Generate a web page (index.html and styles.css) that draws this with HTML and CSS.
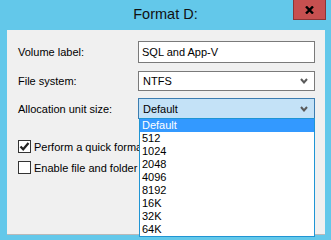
FILE: index.html
```html
<!DOCTYPE html>
<html lang="en">
<head>
  <meta charset="UTF-8" />
  <title>Format D:</title>
  <link rel="stylesheet" href="styles.css" />
</head>
<body>

<div class="window">
  <!-- Title bar -->
  <div class="titlebar">
    <span class="title">Format D:</span>
    <button class="close" type="button" aria-label="Close">
      <svg width="9" height="8" viewBox="0 0 9 8">
        <path d="M1 0.5 L8 7.5 M8 0.5 L1 7.5" stroke="#000" stroke-width="2.4" fill="none" />
      </svg>
    </button>
  </div>

  <!-- Dialog content -->
  <div class="panel">
    <div class="row row-text">
      <span class="label">Volume label:</span>
      <div class="field textbox">SQL and App-V</div>
    </div>

    <div class="row row-fs">
      <span class="label">File system:</span>
      <div class="field combo">
        <span>NTFS</span>
        <svg class="chevron" width="8" height="6" viewBox="0 0 8 6">
          <path d="M1 1 L4 4.5 L7 1" stroke="#5a5a5a" stroke-width="2" fill="none" />
        </svg>
      </div>
    </div>

    <div class="row row-alloc">
      <span class="label">Allocation unit size:</span>
      <div class="field-wrap">
        <div class="field combo combo-open">
          <span>Default</span>
          <svg class="chevron" width="8" height="6" viewBox="0 0 8 6">
            <path d="M1 1 L4 4.5 L7 1" stroke="#5a5a5a" stroke-width="2" fill="none" />
          </svg>
        </div>
        <ul class="dropdown">
          <li class="selected">Default</li>
          <li>512</li>
          <li>1024</li>
          <li>2048</li>
          <li>4096</li>
          <li>8192</li>
          <li>16K</li>
          <li>32K</li>
          <li>64K</li>
        </ul>
      </div>
    </div>

    <!-- checkbox labels run under the open list, so they are cut at its edge -->
    <div class="checks">
      <div class="check">
        <span class="box">
          <svg width="11" height="11" viewBox="0 0 11 11">
            <path d="M1.5 5.5 L4.2 8.3 L9.5 2" stroke="#222" stroke-width="2.2" fill="none" />
          </svg>
        </span>
        <span>Perform a quick format</span>
      </div>
      <div class="check">
        <span class="box"></span>
        <span>Enable file and folder compression</span>
      </div>
    </div>
  </div>
</div>

</body>
</html>
```

FILE: styles.css
```css
* {
  margin: 0;
  padding: 0;
  box-sizing: border-box;
}

body {
  font-family: "Liberation Sans", Arial, sans-serif;
  font-size: 11px;
  color: #000;
  background: #63c8ea;
}

.window {
  width: 331px;
  height: 240px;
  background: #63c8ea;
  overflow: hidden;
}

/* Title bar */
.titlebar {
  height: 30px;
  display: grid;
  grid-template-columns: 1fr auto 1fr;
  align-items: start;
}

.title {
  grid-column: 2;
  padding-top: 5px;
  font-size: 14.5px;
  line-height: 18px;
  color: #111;
}

.close {
  grid-column: 3;
  justify-self: end;
  width: 33px;
  height: 20px;
  margin-right: 5px;
  background: #c75050;
  border: 1px solid #8c3535;
  border-top: none;
  display: flex;
  align-items: center;
  justify-content: center;
}

/* Panel */
.panel {
  margin: 0 6px 0 7px;
  height: 205px;
  padding: 11px 10px 0 11px;
  background: #f0f0f0;
  border-bottom: 1px solid #b9b9b9;
}

.row {
  display: grid;
  grid-template-columns: 120px 1fr;
  align-items: center;
}

.row-text { height: 22px; margin-bottom: 8px; }
.row-fs { height: 20px; margin-bottom: 7px; }
.row-alloc { height: 21px; }

.label {
  line-height: 14px;
}

.field {
  height: 100%;
  display: flex;
  align-items: center;
  padding-left: 3px;
  background: #fff;
  border: 1px solid #7a7a7a;
}

.field-wrap {
  height: 100%;
  position: relative;
}

.combo {
  justify-content: space-between;
  padding-right: 6px;
  padding-left: 4px;
}

.combo-open {
  background: #c4e2f7;
  border-color: #3c7db0;
}

/* Open dropdown list */
.dropdown {
  position: absolute;
  top: calc(100% - 1px);
  left: 1px;
  right: 0;
  list-style: none;
  background: #fff;
  border: 1px solid #1f95d4;
  z-index: 2;
}

.dropdown li {
  height: 13px;
  line-height: 13px;
  padding-left: 2px;
}

.dropdown li.selected {
  background: #3399ff;
  color: #fff;
}

/* Checkboxes */
.checks {
  margin-top: 21px;
  width: 121px;
  display: flex;
  flex-direction: column;
  gap: 8px;
  overflow: hidden;
}

.check {
  display: flex;
  align-items: center;
  gap: 3px;
  height: 13px;
  white-space: nowrap;
}

.box {
  width: 13px;
  height: 13px;
  flex: none;
  background: #fff;
  border: 1px solid #333;
  display: flex;
  align-items: center;
  justify-content: center;
}
```
